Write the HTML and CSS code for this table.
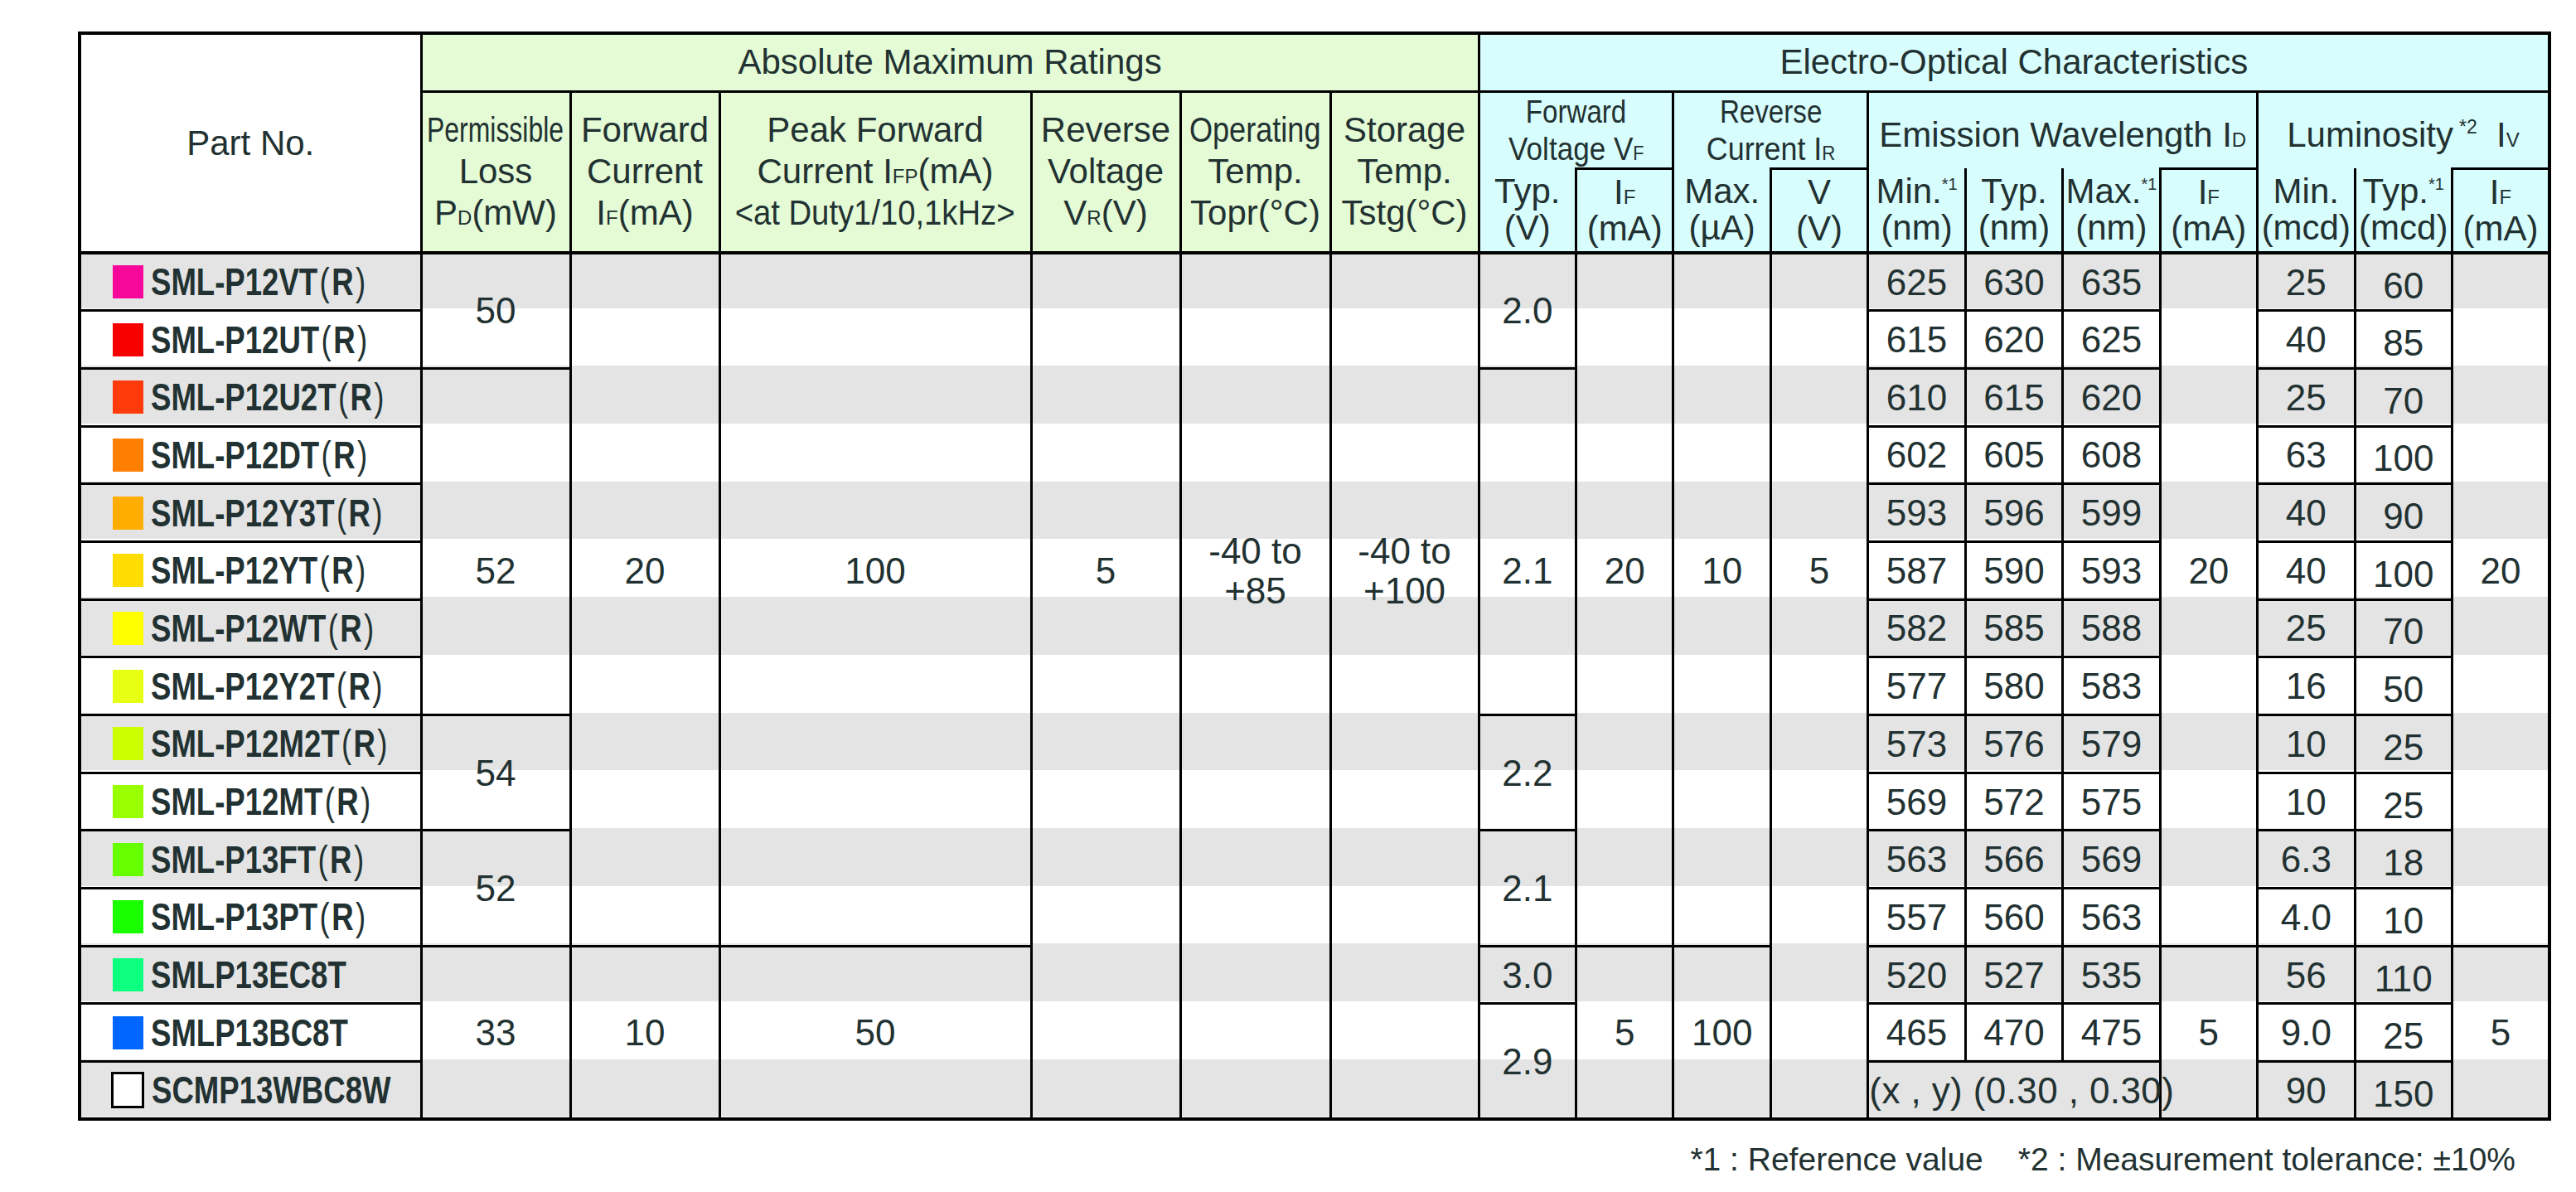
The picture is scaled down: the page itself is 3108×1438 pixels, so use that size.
FILE: index.html
```html
<!DOCTYPE html>
<html lang="en">
<head>
<meta charset="utf-8">
<title>LED Specifications</title>
<link rel="stylesheet" href="styles.css">
</head>
<body>
<div class="page">
<table class="spec">
<colgroup>
<col class="w-pn"><col class="w-180"><col class="w-180"><col class="w-376"><col class="w-180"><col class="w-181"><col class="w-179">
<col class="w-eo"><col class="w-eo"><col class="w-eo"><col class="w-eo"><col class="w-eo"><col class="w-eo"><col class="w-eo"><col class="w-eo"><col class="w-eo"><col class="w-eo"><col class="w-eo">
</colgroup>
<thead>
<tr class="h1">
<th rowspan="3" class="ph">Part No.</th>
<th colspan="6" class="g">Absolute Maximum Ratings</th>
<th colspan="11" class="c">Electro-Optical Characteristics</th>
</tr>
<tr class="h2">
<th rowspan="2" class="g"><div class="ln l50"><span class="x76">Permissible</span><span>Loss</span><span>P<small>D</small>(mW)</span></div></th>
<th rowspan="2" class="g"><div class="ln l50"><span>Forward</span><span>Current</span><span>I<small>F</small>(mA)</span></div></th>
<th rowspan="2" class="g"><div class="ln l50"><span>Peak Forward</span><span>Current I<small>FP</small>(mA)</span><span class="x91">&lt;at Duty1/10,1kHz&gt;</span></div></th>
<th rowspan="2" class="g"><div class="ln l50"><span>Reverse</span><span>Voltage</span><span>V<small>R</small>(V)</span></div></th>
<th rowspan="2" class="g"><div class="ln l50"><span class="x86">Operating</span><span>Temp.</span><span>Topr(°C)</span></div></th>
<th rowspan="2" class="g"><div class="ln l50"><span>Storage</span><span>Temp.</span><span>Tstg(°C)</span></div></th>
<th colspan="2" class="c grp"><div class="ln l45"><span class="x85">Forward</span><span class="x90">Voltage V<small>F</small></span></div></th>
<th colspan="2" class="c grp"><div class="ln l45"><span class="x85">Reverse</span><span class="x92">Current I<small>R</small></span></div></th>
<th colspan="4" class="c grp one">Emission Wavelength I<small>D</small></th>
<th colspan="3" class="c grp one">Luminosity<sup class="s2">*2</sup>&nbsp;&nbsp;I<small>V</small></th>
</tr>
<tr class="h3">
<th class="c op"><div class="ln l44"><span>Typ.</span><span>(V)</span></div></th>
<th class="c"><div class="ln l44"><span>I<small>F</small></span><span>(mA)</span></div></th>
<th class="c op"><div class="ln l44"><span>Max.</span><span>(µA)</span></div></th>
<th class="c"><div class="ln l44"><span>V</span><span>(V)</span></div></th>
<th class="c op"><div class="ln l44"><span>Min.<sup>*1</sup></span><span>(nm)</span></div></th>
<th class="c op"><div class="ln l44"><span>Typ.</span><span>(nm)</span></div></th>
<th class="c op"><div class="ln l44"><span>Max.<sup>*1</sup></span><span>(nm)</span></div></th>
<th class="c"><div class="ln l44"><span>I<small>F</small></span><span>(mA)</span></div></th>
<th class="c op"><div class="ln l44"><span>Min.</span><span>(mcd)</span></div></th>
<th class="c op"><div class="ln l44"><span>Typ.<sup>*1</sup></span><span>(mcd)</span></div></th>
<th class="c"><div class="ln l44"><span>I<small>F</small></span><span>(mA)</span></div></th>
</tr>
</thead>
<tbody>
<tr>
<td class="pn"><div class="pw"><i class="sw vt"></i><b class="pt">SML-P12VT<span class="pr">(</span>R<span class="pr">)</span></b></div></td>
<td rowspan="2">50</td>
<td rowspan="12" class="at5">20</td>
<td rowspan="12" class="at5">100</td>
<td rowspan="15" class="at5">5</td>
<td rowspan="15" class="tmp"><div class="ln l48"><span>-40 to</span><span>+85</span></div></td>
<td rowspan="15" class="tmp"><div class="ln l48"><span>-40 to</span><span>+100</span></div></td>
<td rowspan="2">2.0</td>
<td rowspan="12" class="at5">20</td>
<td rowspan="12" class="at5">10</td>
<td rowspan="15" class="at5">5</td>
<td>625</td><td>630</td><td>635</td>
<td rowspan="12" class="at5">20</td>
<td>25</td><td class="lt">60</td>
<td rowspan="12" class="at5">20</td>
</tr>
<tr>
<td class="pn"><div class="pw"><i class="sw ut"></i><b class="pt">SML-P12UT<span class="pr">(</span>R<span class="pr">)</span></b></div></td>
<td>615</td><td>620</td><td>625</td>
<td>40</td><td class="lt">85</td>
</tr>
<tr>
<td class="pn"><div class="pw"><i class="sw u2t"></i><b class="pt">SML-P12U2T<span class="pr">(</span>R<span class="pr">)</span></b></div></td>
<td rowspan="6" class="at3">52</td>
<td rowspan="6" class="at3">2.1</td>
<td>610</td><td>615</td><td>620</td>
<td>25</td><td class="lt">70</td>
</tr>
<tr>
<td class="pn"><div class="pw"><i class="sw dt"></i><b class="pt">SML-P12DT<span class="pr">(</span>R<span class="pr">)</span></b></div></td>
<td>602</td><td>605</td><td>608</td>
<td>63</td><td class="lt">100</td>
</tr>
<tr>
<td class="pn"><div class="pw"><i class="sw y3t"></i><b class="pt">SML-P12Y3T<span class="pr">(</span>R<span class="pr">)</span></b></div></td>
<td>593</td><td>596</td><td>599</td>
<td>40</td><td class="lt">90</td>
</tr>
<tr>
<td class="pn"><div class="pw"><i class="sw yt"></i><b class="pt">SML-P12YT<span class="pr">(</span>R<span class="pr">)</span></b></div></td>
<td>587</td><td>590</td><td>593</td>
<td>40</td><td class="lt">100</td>
</tr>
<tr>
<td class="pn"><div class="pw"><i class="sw wt"></i><b class="pt">SML-P12WT<span class="pr">(</span>R<span class="pr">)</span></b></div></td>
<td>582</td><td>585</td><td>588</td>
<td>25</td><td class="lt">70</td>
</tr>
<tr>
<td class="pn"><div class="pw"><i class="sw y2t"></i><b class="pt">SML-P12Y2T<span class="pr">(</span>R<span class="pr">)</span></b></div></td>
<td>577</td><td>580</td><td>583</td>
<td>16</td><td class="lt">50</td>
</tr>
<tr>
<td class="pn"><div class="pw"><i class="sw m2t"></i><b class="pt">SML-P12M2T<span class="pr">(</span>R<span class="pr">)</span></b></div></td>
<td rowspan="2">54</td>
<td rowspan="2">2.2</td>
<td>573</td><td>576</td><td>579</td>
<td>10</td><td class="lt">25</td>
</tr>
<tr>
<td class="pn"><div class="pw"><i class="sw mt"></i><b class="pt">SML-P12MT<span class="pr">(</span>R<span class="pr">)</span></b></div></td>
<td>569</td><td>572</td><td>575</td>
<td>10</td><td class="lt">25</td>
</tr>
<tr>
<td class="pn"><div class="pw"><i class="sw ft"></i><b class="pt">SML-P13FT<span class="pr">(</span>R<span class="pr">)</span></b></div></td>
<td rowspan="2">52</td>
<td rowspan="2">2.1</td>
<td>563</td><td>566</td><td>569</td>
<td>6.3</td><td class="lt">18</td>
</tr>
<tr>
<td class="pn"><div class="pw"><i class="sw pt-c"></i><b class="pt">SML-P13PT<span class="pr">(</span>R<span class="pr">)</span></b></div></td>
<td>557</td><td>560</td><td>563</td>
<td>4.0</td><td class="lt">10</td>
</tr>
<tr>
<td class="pn"><div class="pw"><i class="sw ec"></i><b class="pt">SMLP13EC8T</b></div></td>
<td rowspan="3">33</td>
<td rowspan="3">10</td>
<td rowspan="3">50</td>
<td>3.0</td>
<td rowspan="3">5</td>
<td rowspan="3">100</td>
<td>520</td><td>527</td><td>535</td>
<td rowspan="3">5</td>
<td>56</td><td class="lt">110</td>
<td rowspan="3">5</td>
</tr>
<tr>
<td class="pn"><div class="pw"><i class="sw bc"></i><b class="pt">SMLP13BC8T</b></div></td>
<td rowspan="2">2.9</td>
<td>465</td><td>470</td><td>475</td>
<td>9.0</td><td class="lt">25</td>
</tr>
<tr>
<td class="pn"><div class="pw"><i class="sw wh"></i><b class="pt">SCMP13WBC8W</b></div></td>
<td colspan="3" class="xy">(x , y) (0.30 , 0.30)</td>
<td>90</td><td class="lt">150</td>
</tr>
</tbody>
</table>
<p class="note">*1 : Reference value<span class="gap"></span>*2 : Measurement tolerance: ±10%</p>
</div>
</body>
</html>
```

FILE: styles.css
```css
* { box-sizing: border-box; }

html, body {
  margin: 0;
  padding: 0;
  background: #fff;
}

body {
  font-family: "Liberation Sans", Arial, Helvetica, sans-serif;
  color: #223131;
  --r: 69.7px;
}

.page {
  padding: 38px 0 0 94px;
}

/* ---------- table ---------- */
.spec {
  border-collapse: collapse;
  table-layout: fixed;
  width: 2980px;
  border: 4px solid #000;
  background-color: #fff;
  background-image: repeating-linear-gradient(to bottom,
      #e4e4e4 0, #e4e4e4 69.7px, #fff 69.7px, #fff 139.4px);
  background-origin: border-box;
  background-position: 0 264px;
}

.w-pn { width: 412px; }
.w-180 { width: 180px; }
.w-181 { width: 181px; }
.w-179 { width: 179px; }
.w-376 { width: 376px; }
.w-eo { width: 117.45px; }

.spec th,
.spec td {
  border: 3px solid #000;
  padding: 0;
  text-align: center;
  vertical-align: middle;
  white-space: nowrap;
  font-weight: normal;
}

.spec th {
  font-size: 42px;
  line-height: 50px;
}

.spec td {
  font-size: 44px;
  line-height: 65px;
}

.h1 { height: 70px; }
.h2 { height: 92px; }
.h3 { height: 102px; }
.spec tbody tr { height: var(--r); }
.spec tbody tr:first-child td { border-top-width: 4px; }

/* header colours */
.ph { background: #fff; padding: 16px 22px 0 0; }
.g { background: #e4fbd6; }
.c { background: #d8fdfd; }

/* group headers with partial lines below */
.grp { border-bottom-style: none !important; font-size: 39px !important; }
.one { padding-top: 12px !important; font-size: 42px !important; }
.op { border-top-style: none !important; }

.ln {
  display: flex;
  flex-direction: column;
  align-items: center;
}
.l50 { line-height: 50px; }
.l45 { line-height: 45px; }
.l44 { line-height: 44px; }
.l48 { line-height: 48px; }

.ln > span { display: block; white-space: nowrap; }

.x76 { transform: scaleX(.76); }
.x85 { transform: scaleX(.85); }
.x86 { transform: scaleX(.86); }
.x90 { transform: scaleX(.90); }
.x91 { transform: scaleX(.91); }
.x92 { transform: scaleX(.92); }

small {
  font-size: 24px;
  vertical-align: baseline;
  line-height: 0;
}

sup {
  font-size: 20px;
  line-height: 0;
  vertical-align: 16px;
}
sup.s2 {
  font-size: 23px;
  vertical-align: 16px;
  margin-left: 7px;
}

/* body cells */
.at5 {
  vertical-align: top !important;
  padding-top: 349px !important;
}
.at3 {
  vertical-align: top !important;
  padding-top: 210px !important;
}
.tmp {
  vertical-align: top !important;
  padding-top: 334px !important;
}
.lt {
  padding-top: 8px !important;
  line-height: 57px !important;
}
.xy { letter-spacing: 0.4px; }

/* part numbers */
.pn {
  text-align: left !important;
  padding-left: 38px !important;
}
.pw {
  display: flex;
  align-items: center;
  gap: 9px;
  height: 46px;
}
.sw {
  display: block;
  flex: none;
  width: 37px;
  height: 40px;
}
.pt {
  display: inline-block;
  font-weight: bold;
  font-size: 46px;
  line-height: 46px;
  transform: scaleX(.795);
  transform-origin: left center;
  white-space: nowrap;
}
.pr {
  font-weight: normal;
  margin: 0 3px;
}

.vt { background: #f7089a; }
.ut { background: #f70000; }
.u2t { background: #ff3b0b; }
.dt { background: #ff8000; }
.y3t { background: #ffad00; }
.yt { background: #ffdd00; }
.wt { background: #ffff00; }
.y2t { background: #e6ff12; }
.m2t { background: #ccff00; }
.mt { background: #99ff00; }
.ft { background: #66ff00; }
.pt-c { background: #1aff00; }
.ec { background: #0dff80; }
.bc { background: #0066ff; }
.wh {
  background: #fff;
  border: 3px solid #000;
  width: 40px;
  height: 44px;
  margin-left: -2px;
}

/* footnote */
.note {
  margin: 24px 73px 0 0;
  text-align: right;
  font-size: 39px;
  line-height: 46px;
}
.gap {
  display: inline-block;
  width: 42px;
}
```
